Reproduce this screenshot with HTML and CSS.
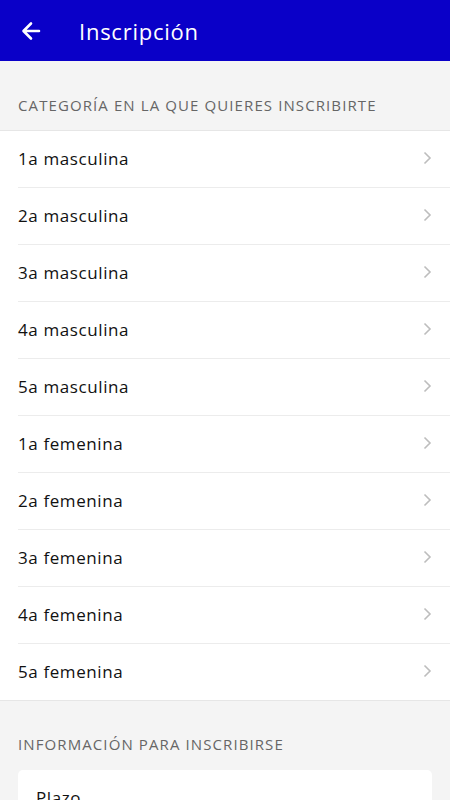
FILE: index.html
```html
<!DOCTYPE html>
<html lang="es">
<head>
<meta charset="utf-8">
<title>Inscripción</title>
<link rel="stylesheet" href="styles.css">
</head>
<body>
<header class="appbar">
  <button class="back" aria-label="Volver">
    <svg width="20" height="20" viewBox="0 0 20 20"><path d="M18 10H3M10 2.5L2.5 10L10 17.5" fill="none" stroke="#fff" stroke-width="2.6" stroke-linecap="round" stroke-linejoin="round"/></svg>
  </button>
  <h1 class="title">Inscripción</h1>
</header>
<main class="content">
  <h2 class="section-title">CATEGORÍA EN LA QUE QUIERES INSCRIBIRTE</h2>
  <ul class="list">
    <li class="item"><span>1a masculina</span><svg class="chev" width="9" height="14" viewBox="0 0 9 14"><path d="M1.5 1.5L7 7L1.5 12.5" fill="none" stroke="#bdbdbd" stroke-width="1.6"/></svg></li>
    <li class="item"><span>2a masculina</span><svg class="chev" width="9" height="14" viewBox="0 0 9 14"><path d="M1.5 1.5L7 7L1.5 12.5" fill="none" stroke="#bdbdbd" stroke-width="1.6"/></svg></li>
    <li class="item"><span>3a masculina</span><svg class="chev" width="9" height="14" viewBox="0 0 9 14"><path d="M1.5 1.5L7 7L1.5 12.5" fill="none" stroke="#bdbdbd" stroke-width="1.6"/></svg></li>
    <li class="item"><span>4a masculina</span><svg class="chev" width="9" height="14" viewBox="0 0 9 14"><path d="M1.5 1.5L7 7L1.5 12.5" fill="none" stroke="#bdbdbd" stroke-width="1.6"/></svg></li>
    <li class="item"><span>5a masculina</span><svg class="chev" width="9" height="14" viewBox="0 0 9 14"><path d="M1.5 1.5L7 7L1.5 12.5" fill="none" stroke="#bdbdbd" stroke-width="1.6"/></svg></li>
    <li class="item"><span>1a femenina</span><svg class="chev" width="9" height="14" viewBox="0 0 9 14"><path d="M1.5 1.5L7 7L1.5 12.5" fill="none" stroke="#bdbdbd" stroke-width="1.6"/></svg></li>
    <li class="item"><span>2a femenina</span><svg class="chev" width="9" height="14" viewBox="0 0 9 14"><path d="M1.5 1.5L7 7L1.5 12.5" fill="none" stroke="#bdbdbd" stroke-width="1.6"/></svg></li>
    <li class="item"><span>3a femenina</span><svg class="chev" width="9" height="14" viewBox="0 0 9 14"><path d="M1.5 1.5L7 7L1.5 12.5" fill="none" stroke="#bdbdbd" stroke-width="1.6"/></svg></li>
    <li class="item"><span>4a femenina</span><svg class="chev" width="9" height="14" viewBox="0 0 9 14"><path d="M1.5 1.5L7 7L1.5 12.5" fill="none" stroke="#bdbdbd" stroke-width="1.6"/></svg></li>
    <li class="item"><span>5a femenina</span><svg class="chev" width="9" height="14" viewBox="0 0 9 14"><path d="M1.5 1.5L7 7L1.5 12.5" fill="none" stroke="#bdbdbd" stroke-width="1.6"/></svg></li>
  </ul>
  <h2 class="section-title second">INFORMACIÓN PARA INSCRIBIRSE</h2>
  <div class="card">
    <p class="card-label">Plazo</p>
  </div>
</main>
</body>
</html>
```
FILE: styles.css
```css
* { box-sizing: border-box; }
html, body { margin: 0; padding: 0; }
body {
  font-family: "Open Sans", "Noto Sans", sans-serif;
  background: #f4f4f4;
  color: #1a1a1a;
  width: 450px;
  height: 800px;
  overflow: hidden;
}
.appbar {
  height: 61px;
  background: #0a00c8;
  display: flex;
  align-items: center;
  padding-left: 21px;
}
.back {
  background: none;
  border: 0;
  padding: 0;
  width: 20px;
  height: 20px;
  display: flex;
  cursor: pointer;
}
.title {
  margin: 0 0 0 38px;
  color: #fff;
  font-weight: 400;
  font-size: 22px;
  letter-spacing: 0.75px;
}
.section-title {
  margin: 0;
  padding: 33px 18px 14px;
  font-size: 15px;
  font-weight: 400;
  color: #666;
  letter-spacing: 1.1px;
  line-height: 22px;
  border-bottom: 1px solid #e6e6e6;
}
.section-title.second {
  border-bottom: 0;
  padding: 32px 18px 15px;
}
.list {
  list-style: none;
  margin: 0;
  padding: 0;
  background: #fff;
  border-bottom: 1px solid #e6e6e6;
}
.item {
  height: 57px;
  margin-left: 18px;
  padding-right: 18px;
  padding-bottom: 2px;
  display: flex;
  align-items: center;
  justify-content: space-between;
  font-size: 17px;
  color: #111;
  border-bottom: 1px solid #ececec;
  letter-spacing: 0.6px;
}
.item:last-child { border-bottom: 0; height: 56px; }
.chev { flex: none; }
.card {
  margin: 0 18px;
  background: #fff;
  border-radius: 5px;
  padding: 16px 18px;
  height: 80px;
}
.card-label {
  margin: 0;
  font-size: 17px;
  line-height: 23px;
  letter-spacing: 0.6px;
  color: #111;
}
```
